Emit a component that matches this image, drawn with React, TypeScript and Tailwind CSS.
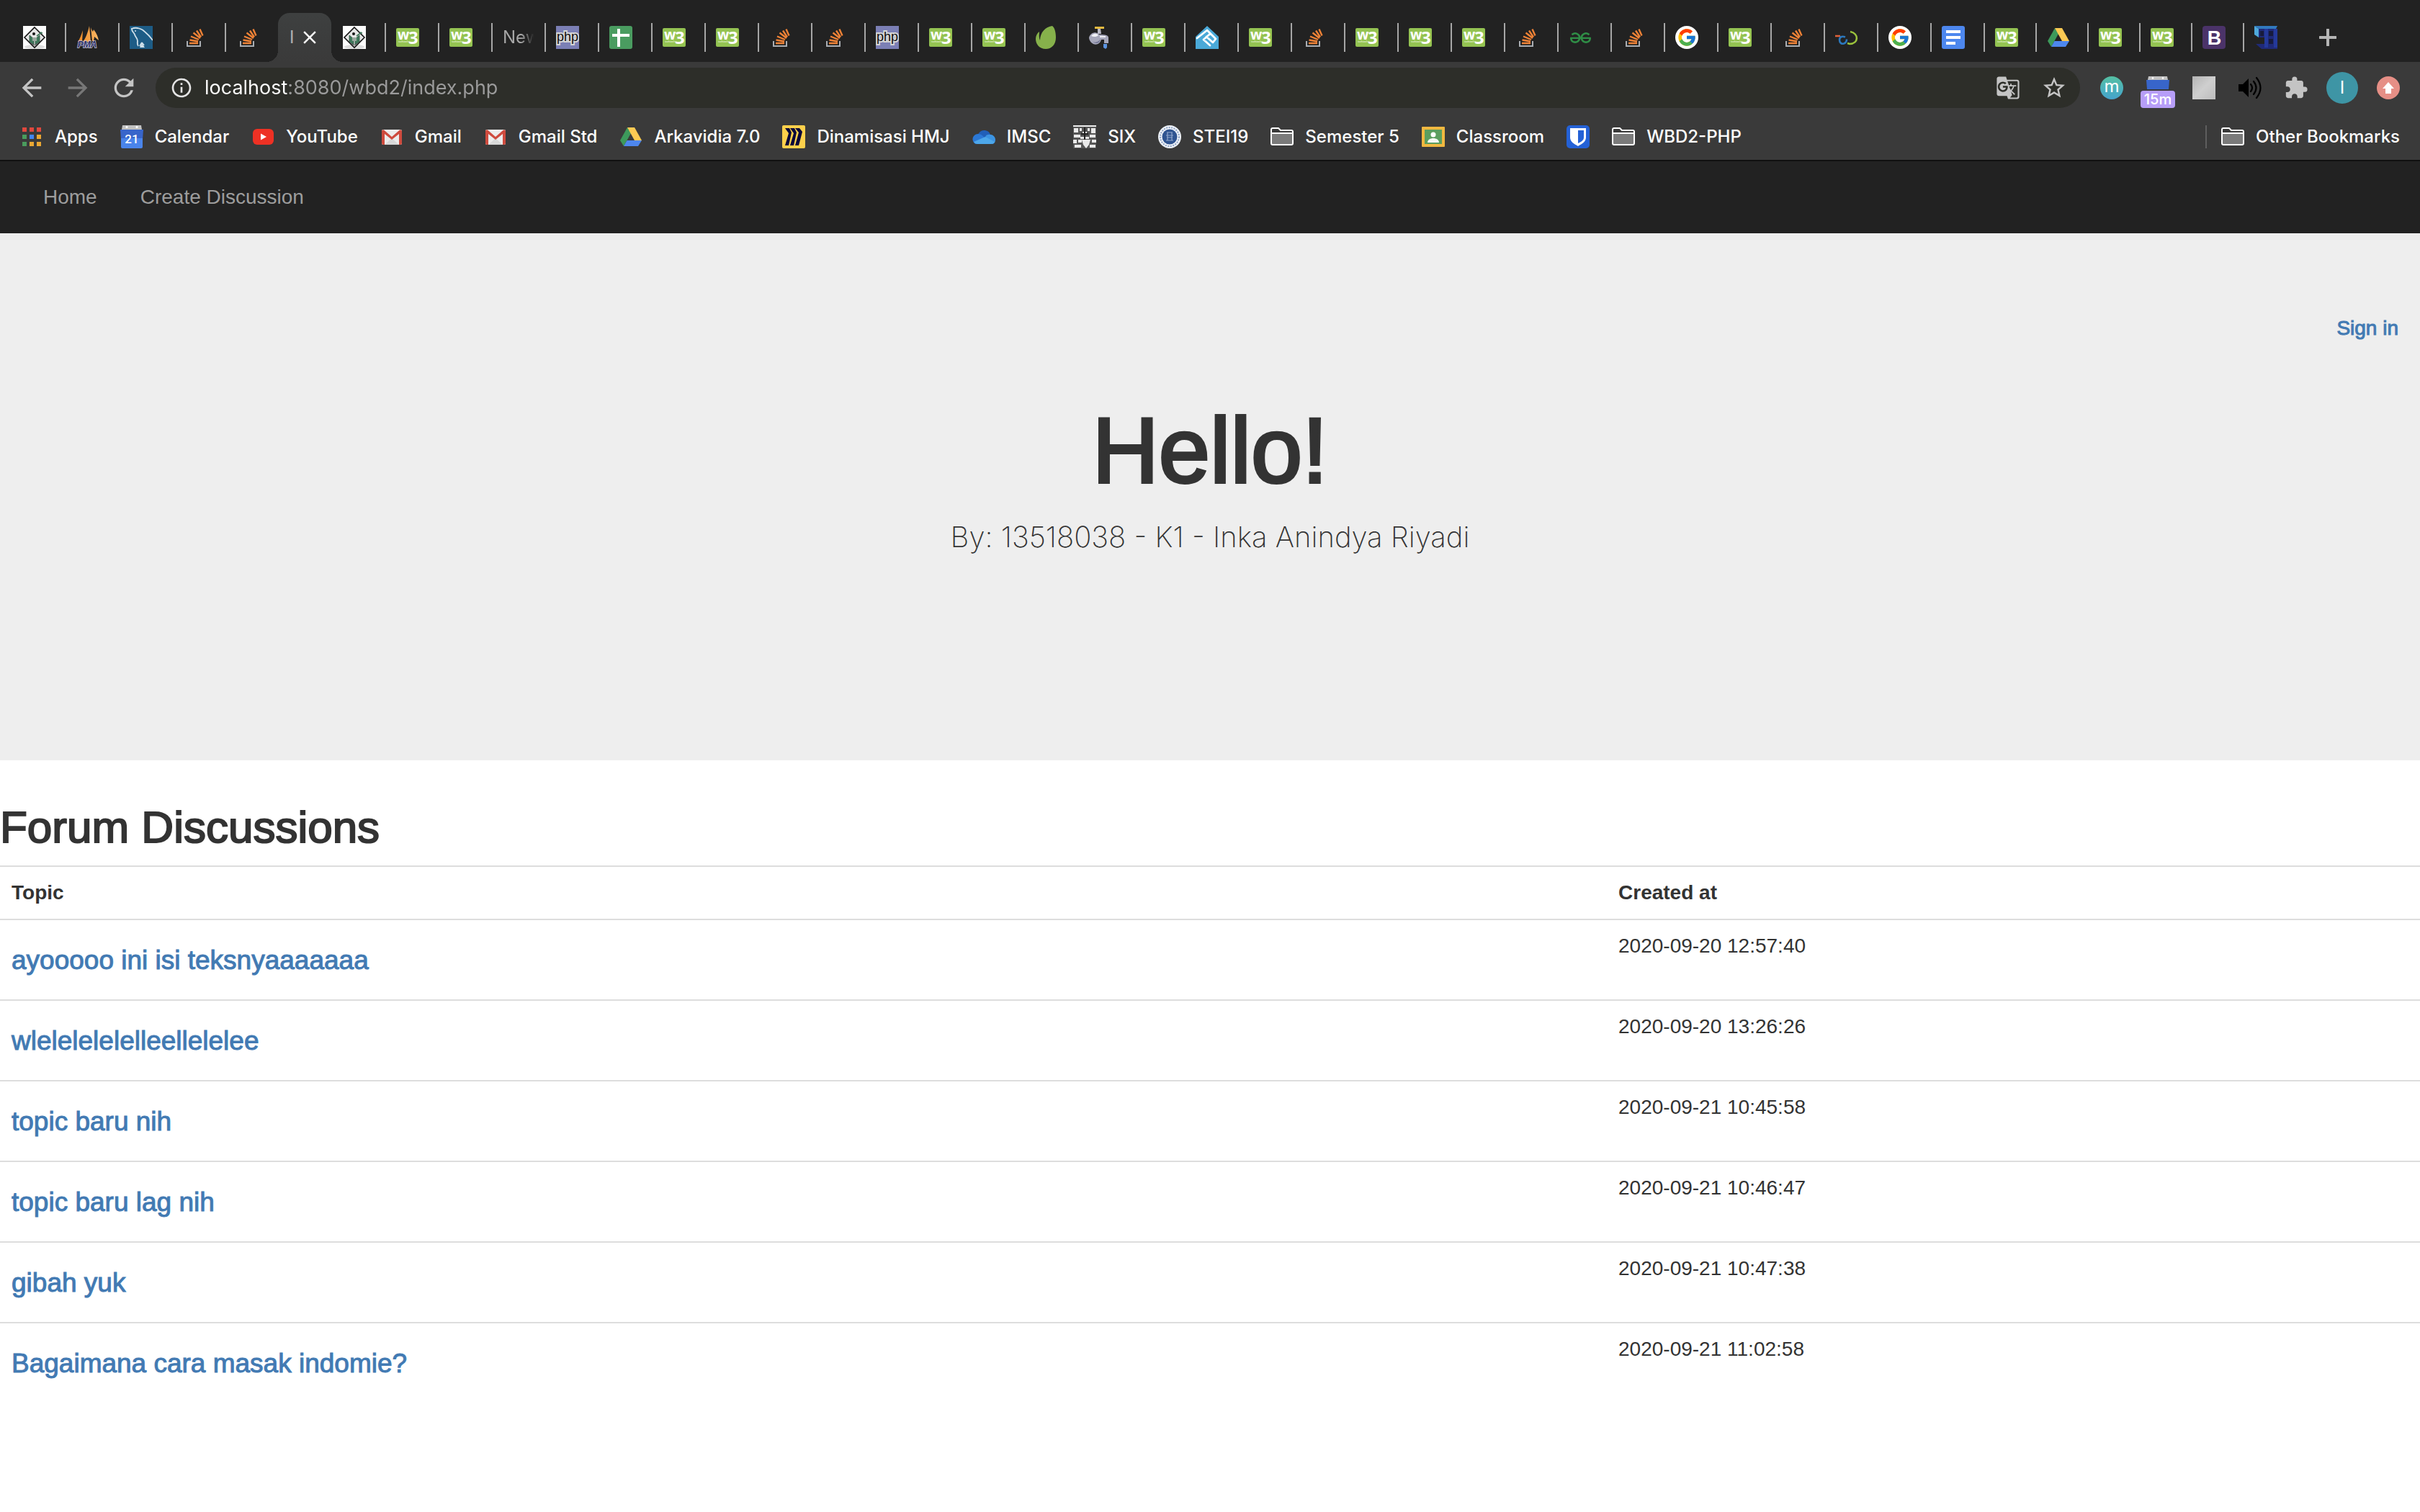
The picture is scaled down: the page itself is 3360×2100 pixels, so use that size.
import React from "react";
import {
  MdArrowBack,
  MdArrowForward,
  MdClose,
  MdExtension,
  MdGTranslate,
  MdInfoOutline,
  MdRefresh,
  MdStarBorder,
} from "react-icons/md";
import { FcGoogle } from "react-icons/fc";
import { SiGeeksforgeeks } from "react-icons/si";

function Icon({ children }: { children: React.ReactNode }) {
  return (
    <svg viewBox="0 0 32 32" className="block size-8 shrink-0" aria-hidden="true">
      {children}
    </svg>
  );
}

const CampusIcon = () => (
  <Icon>
    <rect width="32" height="32" fill="#fdfdfd" />
    <ellipse cx="16" cy="29" rx="14" ry="3" fill="#dcdcdc" />
    <path d="M16 2 30 16 16 30 2 16Z" fill="#e6e6e6" stroke="#141414" strokeWidth="1.6" />
    <path d="M9 13l6 5v8l-6-4zM23 13l-6 5v8l6-4z" fill="#3f7a5c" stroke="#2b4a3b" strokeWidth="0.8" />
    <path d="M13 16h6v5h-6z" fill="#9aa89f" />
    <circle cx="15" cy="11" r="2" fill="#151515" />
    <path d="M19 14l7-5M24 9l3 1" stroke="#3f7a5c" strokeWidth="1.6" />
    <path d="M11 24l5 3 5-3" fill="none" stroke="#555" strokeWidth="1" />
  </Icon>
);

const PmaIcon = () => (
  <Icon>
    <defs>
      <linearGradient id="sail" x1="0" x2="1">
        <stop offset="0" stopColor="#f08a24" />
        <stop offset="1" stopColor="#fbb765" />
      </linearGradient>
    </defs>
    <path d="M9 6 8 22H2C5 18 7 12 9 6ZM18 0l2 22H9C13 17 16 9 18 0ZM20 2c1 3 3 6 3 6l1-3c4 5 6 10 7 15l-6-5-1 6h-2Z" fill="url(#sail)" />
    <text x="15" y="30" textAnchor="middle" fontSize="12" fontWeight="700" fontStyle="italic" fontFamily="Liberation Sans" fill="#2c2f66" stroke="#c9c9dc" strokeWidth="1.500" paintOrder="stroke">
      PMA
    </text>
  </Icon>
);

const MysqlIcon = () => (
  <Icon>
    <rect width="32" height="32" fill="#1d5c86" />
    <path d="M3 4c6-3 15 0 19 5 5 4 7 7 10 11M3 3c-1 4 3 6 4 9 1 4 4 5 4 9 0 2-1 4 1 7M17 23l-3 5M17 23l3 4" fill="none" stroke="#cfe0ea" strokeWidth="1.8" />
    <circle cx="8" cy="7" r="1" fill="#cfe0ea" />
    <path d="M14 30l3-6 4 6z" fill="#cfe0ea" />
  </Icon>
);

const StackIcon = () => (
  <Icon>
    <path d="M6 21v7h18v-7" fill="none" stroke="#a9adb2" strokeWidth="2" />
    <g stroke="#ef8236" strokeWidth="2.4">
      <path d="M9 24h12M9.500 19.500l11.500 2M11 14.500l11 4.500M14.500 9.500l9.500 7.500M19 6.500l6 9M23.500 4.500l4 9" />
    </g>
  </Icon>
);

const W3Icon = () => (
  <Icon>
    <rect y="3" width="32" height="26" rx="2" fill="#94c352" />
    <text x="2" y="19" fontSize="19" fontWeight="700" fontFamily="Open Sans" fill="#fff">
      w
    </text>
    <text x="17" y="25" fontSize="24" fontWeight="700" fontFamily="Open Sans" fill="#fff">
      3
    </text>
    <text x="3" y="23" fontSize="4" fontWeight="700" fontFamily="Liberation Sans" fill="#dcedc0">
      schools
    </text>
  </Icon>
);

const PhpIcon = () => (
  <Icon>
    <rect width="32" height="32" fill="#7b7fb5" />
    <text x="16" y="21" textAnchor="middle" fontSize="18" fontFamily="Liberation Sans" fill="#0c0c0c" stroke="#d6d6d6" strokeWidth="4" paintOrder="stroke">
      php
    </text>
  </Icon>
);

const SheetsIcon = () => (
  <Icon>
    <rect width="32" height="32" rx="3" fill="#4a9c60" />
    <path d="M11 4h4v7h13v4H15v14h-4V15H4v-4h7z" fill="#fff" />
  </Icon>
);

const LeafIcon = () => (
  <Icon>
    <path d="M23 0c3 2 5 8 5 16 0 10-6 16-14 16C5 32 0 25 0 18c0-4 2-8 5-10 0 4-1 8 1 12C6 9 14 1 23 0Z" fill="#86b14b" />
  </Icon>
);

const TapIcon = () => (
  <Icon>
    <path d="M8 1h13v3H8z" fill="#e2b83f" />
    <path d="M12 4h4l1 7h-5z" fill="#b9b9c6" />
    <path d="M0 16c3-8 11-8 14-4 5 0 13 0 13 4v8h-6v-5h-4c-2 8-10 8-14 4-2-2-3-5-3-7Z" fill="#a7a8bb" />
    <path d="M3 14c3-4 8-4 10-1-2 2-6 3-10 1ZM15 14h8v2h-8z" fill="#f1f1f6" />
    <path d="M5 22c4 2 9 0 11-4-1 7-7 7-11 4Z" fill="#6d7090" />
    <path d="M20 25h5v5l-2 2-3-2z" fill="#5b93e0" />
  </Icon>
);

const HandsIcon = () => (
  <Icon>
    <path d="M16 0 32 15v17H0V15Z" fill="#4aa9d8" />
    <path d="M2 17 16 6l12 12-4 5-9-8M11 19l8-7M11 19l9 8" fill="none" stroke="#fff" strokeWidth="2.800" strokeLinecap="round" strokeLinejoin="round" />
  </Icon>
);

const GeeksIcon = () => (
  <span className="flex size-8 items-center justify-center">
    <SiGeeksforgeeks size={29} color="#2f8d46" />
  </span>
);

const GoogleIcon = () => (
  <span className="flex size-8 items-center justify-center rounded-full bg-white">
    <FcGoogle size={28} />
  </span>
);

const LoopIcon = () => (
  <Icon>
    <path d="M0 14h7" stroke="#e0623a" strokeWidth="2.500" />
    <path d="M14 15.500c-5-2-8 0-8 4s3 6 6 5 4-3 4-6" fill="none" stroke="#2b78bd" strokeWidth="2.600" />
    <path d="M21 8c12 2 12 17-1 17l-3-1" fill="none" stroke="#9ac23c" strokeWidth="2.600" />
  </Icon>
);

const DocsIcon = () => (
  <Icon>
    <rect width="32" height="32" rx="3" fill="#4d87ee" />
    <path d="M6 6h20v4H6zM6 14h20v4H6zM6 22h13v4H6z" fill="#fff" />
  </Icon>
);

const DriveIcon = () => (
  <Icon>
    <path d="M11 3 1 21l5 8 10-18z" fill="#3d995b" />
    <path d="M11 3h10l10 18H21z" fill="#fcca53" />
    <path d="M10.500 21H31l-5 8H6z" fill="#4d87ee" />
  </Icon>
);

const BootstrapIcon = () => (
  <Icon>
    <rect width="32" height="32" rx="4" fill="#4b3369" />
    <text x="16.500" y="26" textAnchor="middle" fontSize="27" fontWeight="700" fontFamily="Liberation Sans" fill="#fff">
      B
    </text>
  </Icon>
);

const BlocksIcon = () => (
  <Icon>
    <path d="M6 4h26v28H10l-8-7h12v-9H6z" fill="#1f2a78" />
    <path d="M0 0h32l-2 4H6z" fill="#3179bf" />
    <path d="M0 0 6 4v12l-6-4z" fill="#4fa9dc" />
    <path d="M14 4h5v26h-5zM27 4h5v26h-5z" fill="#24399a" />
    <path d="M8 7h5v7H8zM20 7h6v7h-6zM20 18h6v7h-6z" fill="#171b3c" />
  </Icon>
);

const AppsIcon = () => (
  <Icon>
    <path d="M3 3h6v6H3zM13 3h6v6h-6zM23 3h6v6h-6z" fill="#e0483e" />
    <path d="M3 13h6v6H3zM3 23h6v6H3z" fill="#4a9c5d" />
    <path d="M13 13h6v6h-6z" fill="#4285f4" />
    <path d="M23 13h6v6h-6zM13 23h6v6h-6zM23 23h6v6h-6z" fill="#eba833" />
  </Icon>
);

const CalendarIcon = () => (
  <Icon>
    <path d="M3 0h26l1 6H2z" fill="#c2c2c2" />
    <circle cx="9" cy="2.500" r="1.500" fill="#fff" />
    <circle cx="23" cy="2.500" r="1.500" fill="#fff" />
    <path d="M0 6h32l-1 14H1z" fill="#3865ca" />
    <path d="M1 18h30v12a2 2 0 0 1-2 2H3a2 2 0 0 1-2-2z" fill="#4a84ea" />
    <text x="16" y="25" textAnchor="middle" fontSize="17" fontFamily="Roboto" fill="#fff">
      21
    </text>
  </Icon>
);

const YoutubeIcon = () => (
  <Icon>
    <rect x="2" y="5" width="29" height="22" rx="6" fill="#ee3124" />
    <path d="M13 11.500 21 16l-8 4.500z" fill="#fff" />
  </Icon>
);

const GmailIcon = () => (
  <Icon>
    <rect x="2" y="6" width="28" height="21" rx="2" fill="#ececec" />
    <path d="M6 27 16 18l10 9z" fill="#d8d8d8" />
    <path d="M2 8v17a2 2 0 0 0 2 2h2V12l10 8 10-8v15h2a2 2 0 0 0 2-2V8a2 2 0 0 0-3-1.500L16 16 5 6.500A2 2 0 0 0 2 8Z" fill="#cf4b3e" />
  </Icon>
);

const MiroIcon = () => (
  <Icon>
    <rect width="32" height="32" rx="2" fill="#fdd04b" />
    <path d="M4 4h6l3 6-4 18H4l5-17zM11 4h6l3 6-4 18h-5l5-17zM18 4h6l4 5-5 19h-5l5-18z" fill="#07073a" />
  </Icon>
);

const CloudIcon = () => (
  <Icon>
    <path d="M9 11a9 9 0 0 1 16 2l-5 8-14-6z" fill="#215fb8" />
    <path d="M1 22c-2-5 2-10 7-10 4 0 7 3 9 5L6 26c-3 0-4-2-5-4Z" fill="#2b78d6" />
    <path d="M22 13c6-1 10 3 10 7s-2 6-5 6l-9-10c1-2 2-3 4-3Z" fill="#3c94e2" />
    <path d="M2 23 18 16l13 7c-1 2-3 3-5 3H7c-2 0-4-1-5-3Z" fill="#4da7ea" />
  </Icon>
);

const SixIcon = () => (
  <Icon>
    <rect width="32" height="32" fill="#565656" />
    <path d="M0 0h32v2H0zM1 4h6v6H1zM9 4h3v4H9zM20 4h3v4h-3zM25 4h6v7h-6zM13 9h6v3h-6zM1 13h9v4H1zM23 13h8v4h-8zM10 16h12v3H10zM0 20h5v5H0zM7 20h5v4H7zM12 20h12l-2 7-4 5-4-5zM26 20h6v4h-6zM2 27h9v4H2zM23 27h8v4h-8z" fill="#e9e9e9" />
    <path d="M15 3h2v17h-2zM11 11h10v2H11z" fill="#222" />
  </Icon>
);

const SealIcon = () => (
  <Icon>
    <circle cx="16" cy="16" r="16" fill="#eef2f8" />
    <circle cx="16" cy="16" r="13" fill="none" stroke="#8fa3c6" strokeWidth="2" strokeDasharray="2 1.500" />
    <circle cx="16" cy="16" r="10.500" fill="#2f5491" />
    <path d="M12 10h8M11 14h10M12 17h8M11 21h10M13 10v11M19 10v11" fill="none" stroke="#8fa5cc" strokeWidth="1.200" />
  </Icon>
);

const FolderIcon = () => (
  <Icon>
    <rect x="2" y="12" width="28" height="15" fill="#7b7b7b" />
    <path d="M1 25V6a2 2 0 0 1 2-2h8l3 3h15a2 2 0 0 1 2 2v16a2 2 0 0 1-2 2H3a2 2 0 0 1-2-2ZM1 11h30" fill="none" stroke="#fff" strokeWidth="2" />
  </Icon>
);

const ClassroomIcon = () => (
  <Icon>
    <rect y="2" width="32" height="28" rx="1" fill="#f0b840" />
    <rect x="4" y="6" width="24" height="20" fill="#5b9e5f" />
    <circle cx="16" cy="13" r="3.500" fill="#fff" />
    <path d="M8 24c0-4 4-6 8-6s8 2 8 6z" fill="#f4f8f2" />
  </Icon>
);

const ShieldIcon = () => (
  <Icon>
    <rect width="32" height="32" rx="5" fill="#2461d6" />
    <path d="M5 4h22v13c0 6-6 9-11 12C11 26 5 23 5 17z" fill="#fff" />
    <path d="M16 7h8v10c0 4-4 6-8 8z" fill="#2461d6" />
  </Icon>
);

const tabs: { title: string; icon: React.FC | null }[] = [
  { title: "Campus", icon: CampusIcon },
  { title: "phpMyAdmin", icon: PmaIcon },
  { title: "MySQL", icon: MysqlIcon },
  { title: "Stack Overflow", icon: StackIcon },
  { title: "Stack Overflow", icon: StackIcon },
  { title: "active", icon: null },
  { title: "Campus", icon: CampusIcon },
  { title: "W3Schools", icon: W3Icon },
  { title: "W3Schools", icon: W3Icon },
  { title: "New Tab", icon: null },
  { title: "PHP", icon: PhpIcon },
  { title: "Sheets", icon: SheetsIcon },
  { title: "W3Schools", icon: W3Icon },
  { title: "W3Schools", icon: W3Icon },
  { title: "Stack Overflow", icon: StackIcon },
  { title: "Stack Overflow", icon: StackIcon },
  { title: "PHP", icon: PhpIcon },
  { title: "W3Schools", icon: W3Icon },
  { title: "W3Schools", icon: W3Icon },
  { title: "Envato", icon: LeafIcon },
  { title: "Tap", icon: TapIcon },
  { title: "W3Schools", icon: W3Icon },
  { title: "Hands", icon: HandsIcon },
  { title: "W3Schools", icon: W3Icon },
  { title: "Stack Overflow", icon: StackIcon },
  { title: "W3Schools", icon: W3Icon },
  { title: "W3Schools", icon: W3Icon },
  { title: "W3Schools", icon: W3Icon },
  { title: "Stack Overflow", icon: StackIcon },
  { title: "GeeksforGeeks", icon: GeeksIcon },
  { title: "Stack Overflow", icon: StackIcon },
  { title: "Google", icon: GoogleIcon },
  { title: "W3Schools", icon: W3Icon },
  { title: "Stack Overflow", icon: StackIcon },
  { title: "Tutorial", icon: LoopIcon },
  { title: "Google", icon: GoogleIcon },
  { title: "Docs", icon: DocsIcon },
  { title: "W3Schools", icon: W3Icon },
  { title: "Drive", icon: DriveIcon },
  { title: "W3Schools", icon: W3Icon },
  { title: "W3Schools", icon: W3Icon },
  { title: "Bootstrap", icon: BootstrapIcon },
  { title: "Blocks", icon: BlocksIcon },
];

function TabStrip() {
  return (
    <div className="flex h-[86px] items-end bg-[#222222] pl-4">
      {tabs.map(({ title, icon: TabIcon }, i) => {
        if (title === "active") {
          return (
            <div
              key={i}
              className="relative flex h-[68px] w-[74px] shrink-0 items-center rounded-t-2xl bg-linear-to-b from-[#3e4040] to-[#3a3a3a] pl-4 text-2xl text-white before:absolute before:bottom-0 before:-left-4 before:size-4 before:bg-[radial-gradient(circle_at_top_left,transparent_16px,#3a3a3a_16px)] after:absolute after:-right-4 after:bottom-0 after:size-4 after:bg-[radial-gradient(circle_at_top_right,transparent_16px,#3a3a3a_16px)]"
            >
              <span className="w-3 text-white/60">I</span>
              <button aria-label="Close tab" className="flex size-8 items-center justify-center">
                <MdClose size={30} />
              </button>
            </div>
          );
        }
        const separated = i > 0 && i !== 6;
        return (
          <button
            key={i}
            aria-label={title}
            className={`flex h-[68px] shrink-0 items-center ${i > 36 ? "w-[72px]" : "w-[74px]"}`}
          >
            <span className={`h-10 w-0.5 ${separated ? "bg-[#a6a6a6]" : ""}`} />
            <span className="ml-3.5 flex">
              {TabIcon ? (
                <TabIcon />
              ) : (
                <span className="bg-linear-to-r from-[#a8a8a8] from-50% to-transparent to-85% bg-clip-text text-left text-2xl text-transparent">
                  New
                </span>
              )}
            </span>
          </button>
        );
      })}
      <button aria-label="New tab" className="ml-1.5 flex h-[68px] w-20 items-center justify-center text-[#b5b5b5]">
        <svg viewBox="0 0 24 24" className="size-6" aria-hidden="true">
          <path d="M12 1v22M1 12h22" stroke="currentColor" strokeWidth="4" strokeLinecap="round" />
        </svg>
      </button>
    </div>
  );
}

const slot = "flex h-[72px] w-16 shrink-0 items-center justify-center";

function Toolbar() {
  return (
    <div className="flex h-[72px] items-center px-3">
      <button aria-label="Back" className={`${slot} text-[#c4c4c4]`}>
        <MdArrowBack size={40} />
      </button>
      <button aria-label="Forward" className={`${slot} text-[#777777]`}>
        <MdArrowForward size={40} />
      </button>
      <button aria-label="Reload" className={`${slot} text-[#c4c4c4]`}>
        <MdRefresh size={40} />
      </button>
      <div className="mx-3 flex h-14 flex-1 items-center overflow-hidden rounded-full bg-[#2d2e29] pr-1 pl-5 text-[#c4c4c4]">
        <button aria-label="Site information" className="text-[#e4e4e4]">
          <MdInfoOutline size={32} />
        </button>
        <input
          aria-label="Address"
          defaultValue="localhost:8080/wbd2/index.php"
          className="ml-4 flex-1 bg-[linear-gradient(90deg,#ffffff_115px,#9b9b9b_115px)] bg-clip-text text-[27px] text-transparent outline-none"
        />
        <button aria-label="Translate" className={slot}>
          <MdGTranslate size={34} />
        </button>
        <button aria-label="Bookmark" className={slot}>
          <MdStarBorder size={36} />
        </button>
      </div>
      <button aria-label="Momentum" className={slot}>
        <span className="flex size-8 items-center justify-center rounded-full bg-linear-to-b from-[#55bfa2] to-[#46a3cc] pb-1 text-2xl leading-none text-white">
          m
        </span>
      </button>
      <button aria-label="Calendar, 15 minutes" className={slot}>
        <CalendarBadge />
      </button>
      <button aria-label="Extension" className={slot}>
        <span className="size-8 bg-linear-to-br from-[#b4b4b4] via-[#cfcfcf] to-[#bdbdbd]" />
      </button>
      <button aria-label="Volume" className={`${slot} text-black`}>
        <svg viewBox="0 0 32 32" className="size-8" aria-hidden="true">
          <path d="M0 11h6l8-8v26l-8-8H0z" fill="currentColor" />
          <path d="M17 11q4 5 0 10M21 7q7 9 0 18M25 2q11 14 0 28" fill="none" stroke="currentColor" strokeWidth="2.200" strokeLinecap="round" />
        </svg>
      </button>
      <button aria-label="Extensions" className={`${slot} text-[#c4c4c4]`}>
        <MdExtension size={34} />
      </button>
      <button aria-label="Profile" className={slot}>
        <span className="flex size-11 items-center justify-center rounded-full bg-[#3e95a5] text-2xl text-white">I</span>
      </button>
      <button aria-label="Update" className={slot}>
        <svg viewBox="0 0 32 32" className="size-8" aria-hidden="true">
          <circle cx="16" cy="16" r="16" fill="#e68f86" />
          <path d="M16 8l8 9h-4v7h-8v-7H8z" fill="#fff" />
        </svg>
      </button>
    </div>
  );
}

function CalendarBadge() {
  return (
    <span className="flex flex-col items-center pt-3">
      <svg viewBox="0 0 32 20" className="h-5 w-8" aria-hidden="true">
        <path d="M3 0h26l1 5H2z" fill="#c2c2c2" />
        <circle cx="9" cy="2.500" r="1.300" fill="#fff" />
        <circle cx="23" cy="2.500" r="1.300" fill="#fff" />
        <path d="M0 5h32l-1 13H1z" fill="#3865ca" />
      </svg>
      <span className="h-6 w-12 rounded bg-[#b79ef8] text-center text-xl leading-6 font-medium text-white">15m</span>
    </span>
  );
}

const bookmarks: { label: string; icon: React.FC }[] = [
  { label: "Apps", icon: AppsIcon },
  { label: "Calendar", icon: CalendarIcon },
  { label: "YouTube", icon: YoutubeIcon },
  { label: "Gmail", icon: GmailIcon },
  { label: "Gmail Std", icon: GmailIcon },
  { label: "Arkavidia 7.0", icon: DriveIcon },
  { label: "Dinamisasi HMJ", icon: MiroIcon },
  { label: "IMSC", icon: CloudIcon },
  { label: "SIX", icon: SixIcon },
  { label: "STEI19", icon: SealIcon },
  { label: "Semester 5", icon: FolderIcon },
  { label: "Classroom", icon: ClassroomIcon },
  { label: "", icon: ShieldIcon },
  { label: "WBD2-PHP", icon: FolderIcon },
];

function BookmarksBar() {
  return (
    <div className="flex h-[66px] items-center gap-[31px] border-b-2 border-[#101010] px-7 text-2xl font-medium whitespace-nowrap text-white">
      {bookmarks.map(({ label, icon: BookmarkIcon }, i) => (
        <a key={i} href="#" aria-label={label || "Bitwarden"} className="flex items-center gap-4">
          <BookmarkIcon />
          {label && <span>{label}</span>}
        </a>
      ))}
      <a href="#" className="ml-auto flex items-center gap-4">
        <span className="mr-1 h-8 w-0.5 bg-[#5e5e5e]" />
        <FolderIcon />
        <span>Other Bookmarks</span>
      </a>
    </div>
  );
}

const discussions = [
  { topic: "ayooooo ini isi teksnyaaaaaaa", created: "2020-09-20 12:57:40" },
  { topic: "wlelelelelelleellelelee", created: "2020-09-20 13:26:26" },
  { topic: "topic baru nih", created: "2020-09-21 10:45:58" },
  { topic: "topic baru lag nih", created: "2020-09-21 10:46:47" },
  { topic: "gibah yuk", created: "2020-09-21 10:47:38" },
  { topic: "Bagaimana cara masak indomie?", created: "2020-09-21 11:02:58" },
];

export default function App() {
  return (
    <div className="min-h-screen bg-white font-['Liberation_Sans',sans-serif] text-[28px] leading-10 text-[#333333]">
      <header className="bg-[#3a3a3a] font-['Inter',sans-serif]">
        <TabStrip />
        <Toolbar />
        <BookmarksBar />
      </header>

      <nav className="flex h-[100px] items-center gap-[60px] bg-[#222222] px-[60px] text-[#9d9d9d]">
        <a href="#">Home</a>
        <a href="#">Create Discussion</a>
      </nav>

      <section className="bg-[#eeeeee] pt-28 pb-[280px] text-center">
        <div className="px-[30px] text-right">
          <a href="#" className="text-[#427ab3] [-webkit-text-stroke:1px]">
            Sign in
          </a>
        </div>
        <h1 className="mt-20 text-[128px] leading-[140px] [-webkit-text-stroke:4px]">Hello!</h1>
        <p className="mt-5 font-['Inter',sans-serif] text-[40px] leading-[60px] font-extralight">
          By: 13518038 - K1 - Inka Anindya Riyadi
        </p>
      </section>

      <main>
        <h2 className="mt-[60px] mb-5 text-[62px] leading-[66px] [-webkit-text-stroke:2px]">Forum Discussions</h2>
        <table className="w-full table-fixed border-separate border-spacing-0 text-left">
          <thead>
            <tr>
              <th className="w-[66.4%] border-t-2 border-[#dddddd] p-4 font-bold">Topic</th>
              <th className="border-t-2 border-[#dddddd] p-4 font-bold">Created at</th>
            </tr>
          </thead>
          <tbody>
            {discussions.map((d) => (
              <tr key={d.topic} className="h-28 align-top">
                <td className="border-t-2 border-[#dddddd] px-4 pt-4">
                  <h4 className="mt-5 text-[37px] leading-10 [-webkit-text-stroke:1px]">
                    <a href="#" className="text-[#427ab3]">
                      {d.topic}
                    </a>
                  </h4>
                </td>
                <td className="border-t-2 border-[#dddddd] px-4 pt-4">{d.created}</td>
              </tr>
            ))}
          </tbody>
        </table>
      </main>
    </div>
  );
}
